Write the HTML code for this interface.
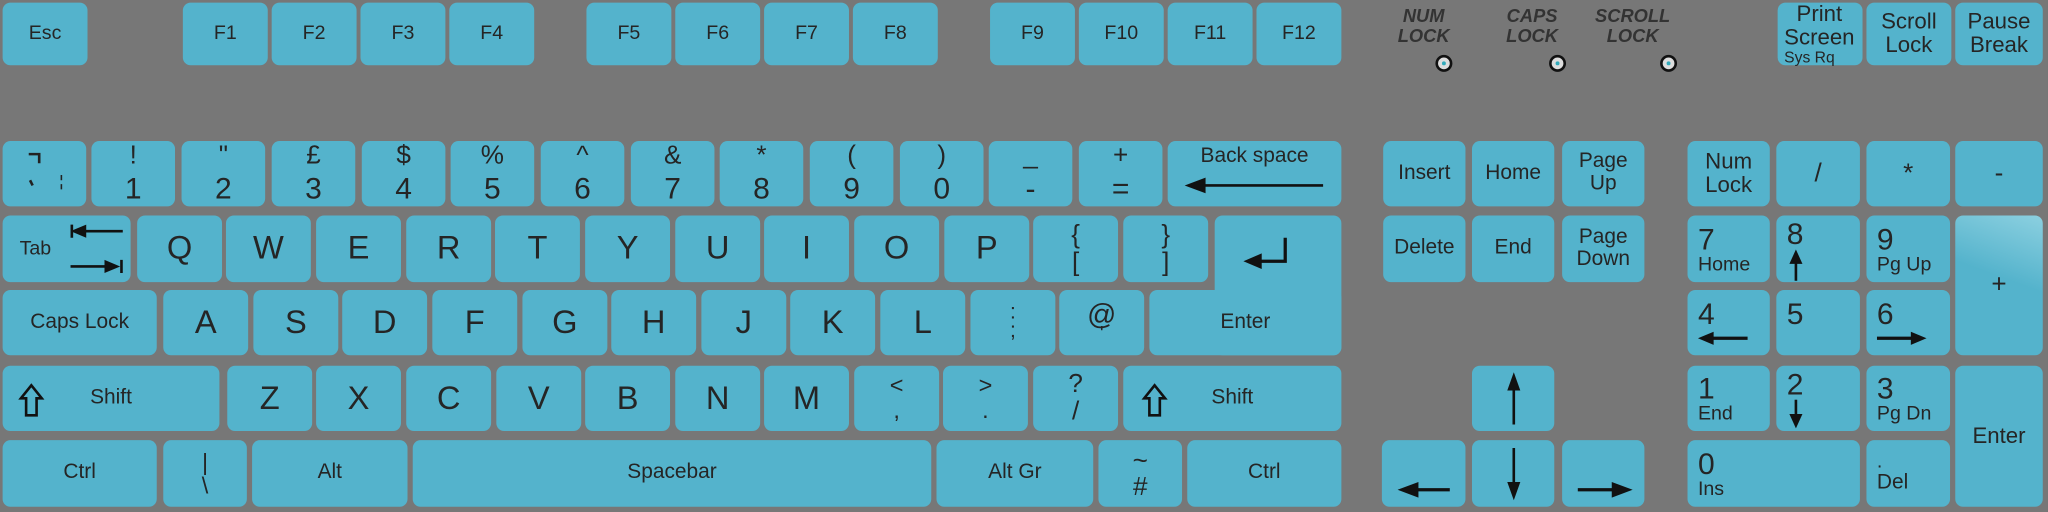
<!DOCTYPE html>
<html><head><meta charset="utf-8"><style>
html,body{margin:0;padding:0;background:#777;width:2048px;height:512px;overflow:hidden}
#w{position:absolute;left:0;top:0;width:1568px;height:392px;transform:scale(1.30612);transform-origin:0 0;background:#777}
.k{position:absolute;background:#54b3cc;border-radius:6px;color:#252525;font-family:"Liberation Sans",sans-serif;display:flex;align-items:center;justify-content:center;text-align:center;font-size:15px;line-height:1.05}
.f{top:2px;height:48px;width:65px}
.n{top:108px;height:50px;width:64px;flex-direction:column}
.n b{font-weight:normal;font-size:20px;display:block;margin-bottom:2px}
.n i{font-style:normal;font-size:23px;display:block}
.q{top:165px;height:51px;width:65px;font-size:25px}
.a{top:222px;height:50px;width:65px;font-size:25px}
.z{top:280px;height:50px;width:65px;font-size:25px}
.b{top:337px;height:51px}
.led{position:absolute;font-family:"Liberation Sans",sans-serif;font-weight:bold;font-style:italic;font-size:14px;color:#333;text-align:center;line-height:15px}
.dot{position:absolute;width:9px;height:9px;border-radius:50%;background:#ddd;border:2.5px solid #111}
.dot:after{content:"";position:absolute;left:3px;top:3px;width:3px;height:3px;border-radius:50%;background:#3ab}
.np{flex-direction:column;align-items:flex-start;justify-content:center;padding-left:8px;box-sizing:border-box}
.np b{font-weight:normal;font-size:23px}
.np i{font-style:normal;font-size:15px}
svg{display:block}
</style></head><body><div id="w">
<!-- F row -->
<div class="k f" style="left:2px">Esc</div>
<div class="k f" style="left:140px">F1</div>
<div class="k f" style="left:208px">F2</div>
<div class="k f" style="left:276px">F3</div>
<div class="k f" style="left:344px">F4</div>
<div class="k f" style="left:449px">F5</div>
<div class="k f" style="left:517px">F6</div>
<div class="k f" style="left:585px">F7</div>
<div class="k f" style="left:653px">F8</div>
<div class="k f" style="left:758px">F9</div>
<div class="k f" style="left:826px">F10</div>
<div class="k f" style="left:894px">F11</div>
<div class="k f" style="left:962px">F12</div>
<div class="k f" style="left:1361px;font-size:17px;flex-direction:column;align-items:flex-start;padding-left:5px;box-sizing:border-box">Print<br>Screen<span style="font-size:12px">Sys Rq</span></div>
<div class="k f" style="left:1429px;font-size:17px">Scroll<br>Lock</div>
<div class="k f" style="left:1497px;width:67px;font-size:17px">Pause<br>Break</div>
<!-- LEDs -->
<div class="led" style="left:1055px;top:5px;width:70px">NUM<br>LOCK</div>
<div class="led" style="left:1138px;top:5px;width:70px">CAPS<br>LOCK</div>
<div class="led" style="left:1205px;top:5px;width:90px">SCROLL<br>LOCK</div>
<div class="dot" style="left:1099px;top:42px"></div>
<div class="dot" style="left:1186px;top:42px"></div>
<div class="dot" style="left:1271px;top:42px"></div>
<!-- number row -->
<div class="k n" style="left:2px"><svg width="64" height="50"><path d="M20 10h8v7" stroke="#222" stroke-width="2" fill="none"/><path d="M21 30l2 4" stroke="#222" stroke-width="2"/><path d="M45 26v4M45 33v4" stroke="#222" stroke-width="1.2"/></svg></div>
<div class="k n" style="left:70px"><b>!</b><i>1</i></div>
<div class="k n" style="left:139px"><b>"</b><i>2</i></div>
<div class="k n" style="left:208px"><b>£</b><i>3</i></div>
<div class="k n" style="left:277px"><b>$</b><i>4</i></div>
<div class="k n" style="left:345px"><b>%</b><i>5</i></div>
<div class="k n" style="left:414px"><b>^</b><i>6</i></div>
<div class="k n" style="left:483px"><b>&amp;</b><i>7</i></div>
<div class="k n" style="left:551px"><b>*</b><i>8</i></div>
<div class="k n" style="left:620px"><b>(</b><i>9</i></div>
<div class="k n" style="left:689px"><b>)</b><i>0</i></div>
<div class="k n" style="left:757px"><b>_</b><i>-</i></div>
<div class="k n" style="left:826px"><b>+</b><i>=</i></div>
<div class="k n" style="left:894px;width:133px;justify-content:flex-start;padding-top:4px;box-sizing:border-box"><span style="font-size:16px">Back space</span><svg width="120" height="22"><path d="M20 13h92" stroke="#111" stroke-width="2"/><path d="M6 13l16-6v12z" fill="#111"/></svg></div>
<!-- Q row -->
<div class="k q" style="left:2px;width:98px;font-size:15px;justify-content:flex-start;padding-left:13px;box-sizing:border-box">Tab<svg style="position:absolute;left:48px;top:4px" width="48" height="44"><path d="M10 8h34" stroke="#111" stroke-width="2"/><path d="M4 8l12-5v10z" fill="#111"/><path d="M5 3v10" stroke="#111" stroke-width="2"/><path d="M4 35h34" stroke="#111" stroke-width="2"/><path d="M42 35l-12-5v10z" fill="#111"/><path d="M43 30v10" stroke="#111" stroke-width="2"/></svg></div>
<div class="k q" style="left:105px">Q</div>
<div class="k q" style="left:173px">W</div>
<div class="k q" style="left:242px">E</div>
<div class="k q" style="left:311px">R</div>
<div class="k q" style="left:379px">T</div>
<div class="k q" style="left:448px">Y</div>
<div class="k q" style="left:517px">U</div>
<div class="k q" style="left:585px">I</div>
<div class="k q" style="left:654px">O</div>
<div class="k q" style="left:723px">P</div>
<div class="k q" style="left:791px;font-size:20px;flex-direction:column">{<br>[</div>
<div class="k q" style="left:860px;font-size:20px;flex-direction:column">}<br>]</div>
<div class="k" style="left:930px;top:165px;width:97px;height:107px"></div>
<div class="k" style="left:880px;top:222px;width:147px;height:50px;font-size:16px">Enter</div>
<svg style="position:absolute;left:950px;top:180px" width="40" height="32"><path d="M34 2v18H14" stroke="#111" stroke-width="2.5" fill="none"/><path d="M2 20l14-6v12z" fill="#111"/></svg>
<!-- A row -->
<div class="k a" style="left:2px;width:118px;font-size:16px">Caps Lock</div>
<div class="k a" style="left:125px">A</div>
<div class="k a" style="left:194px">S</div>
<div class="k a" style="left:262px">D</div>
<div class="k a" style="left:331px">F</div>
<div class="k a" style="left:400px">G</div>
<div class="k a" style="left:468px">H</div>
<div class="k a" style="left:537px">J</div>
<div class="k a" style="left:605px">K</div>
<div class="k a" style="left:674px">L</div>
<div class="k a" style="left:743px;font-size:16px;flex-direction:column;line-height:0.9">:<br>;</div>
<div class="k a" style="left:811px;font-size:22px;flex-direction:column;line-height:0.8">@<span style="font-size:15px">'</span></div>
<!-- Z row -->
<div class="k z" style="left:2px;width:166px;font-size:16px">Shift<svg style="position:absolute;left:12px;top:13px" width="20" height="28"><path d="M10 2L2 12h4v13h8V12h4z" fill="none" stroke="#111" stroke-width="2"/></svg></div>
<div class="k z" style="left:174px">Z</div>
<div class="k z" style="left:242px">X</div>
<div class="k z" style="left:311px">C</div>
<div class="k z" style="left:380px">V</div>
<div class="k z" style="left:448px">B</div>
<div class="k z" style="left:517px">N</div>
<div class="k z" style="left:585px">M</div>
<div class="k z" style="left:654px;font-size:18px;flex-direction:column">&lt;<br>,</div>
<div class="k z" style="left:722px;font-size:18px;flex-direction:column">&gt;<br>.</div>
<div class="k z" style="left:791px;font-size:20px;flex-direction:column">?<br>/</div>
<div class="k z" style="left:860px;width:167px;font-size:16px">Shift<svg style="position:absolute;left:14px;top:13px" width="20" height="28"><path d="M10 2L2 12h4v13h8V12h4z" fill="none" stroke="#111" stroke-width="2"/></svg></div>
<!-- bottom -->
<div class="k b" style="left:2px;width:118px;font-size:16px">Ctrl</div>
<div class="k b" style="left:125px;width:64px;font-size:18px;flex-direction:column;line-height:1">|<br>\</div>
<div class="k b" style="left:193px;width:119px;font-size:16px">Alt</div>
<div class="k b" style="left:316px;width:397px;font-size:16px">Spacebar</div>
<div class="k b" style="left:717px;width:120px;font-size:16px">Alt Gr</div>
<div class="k b" style="left:841px;width:64px;font-size:20px;flex-direction:column;line-height:1">~<br>#</div>
<div class="k b" style="left:909px;width:118px;font-size:16px">Ctrl</div>
<!-- nav -->
<div class="k" style="left:1059px;top:108px;width:63px;height:50px;font-size:16px">Insert</div>
<div class="k" style="left:1127px;top:108px;width:63px;height:50px;font-size:16px">Home</div>
<div class="k" style="left:1196px;top:108px;width:63px;height:50px;font-size:16px">Page<br>Up</div>
<div class="k" style="left:1059px;top:165px;width:63px;height:51px;font-size:16px">Delete</div>
<div class="k" style="left:1127px;top:165px;width:63px;height:51px;font-size:16px">End</div>
<div class="k" style="left:1196px;top:165px;width:63px;height:51px;font-size:16px">Page<br>Down</div>
<div class="k" style="left:1127px;top:280px;width:63px;height:50px"><svg width="20" height="44"><path d="M10 14v28" stroke="#111" stroke-width="2"/><path d="M10 2l-5 14h10z" fill="#111"/></svg></div>
<div class="k" style="left:1058px;top:337px;width:64px;height:51px;align-items:flex-end"><svg width="60" height="22"><path d="M22 9h28" stroke="#111" stroke-width="2.5"/><path d="M10 9l16-6v12z" fill="#111"/></svg></div>
<div class="k" style="left:1127px;top:337px;width:63px;height:51px"><svg width="20" height="44"><path d="M10 2v28" stroke="#111" stroke-width="2"/><path d="M10 42l-5 -14h10z" fill="#111"/></svg></div>
<div class="k" style="left:1196px;top:337px;width:63px;height:51px;align-items:flex-end"><svg width="60" height="22"><path d="M10 9h28" stroke="#111" stroke-width="2.5"/><path d="M52 9l-16-6v12z" fill="#111"/></svg></div>
<!-- numpad -->
<div class="k" style="left:1292px;top:108px;width:63px;height:50px;font-size:17px">Num<br>Lock</div>
<div class="k" style="left:1360px;top:108px;width:64px;height:50px;font-size:20px">/</div>
<div class="k" style="left:1429px;top:108px;width:64px;height:50px;font-size:20px">*</div>
<div class="k" style="left:1497px;top:108px;width:67px;height:50px;font-size:20px">-</div>
<div class="k np" style="left:1292px;top:165px;width:63px;height:51px"><b>7</b><i>Home</i></div>
<div class="k np" style="left:1360px;top:165px;width:64px;height:51px;justify-content:flex-start;padding-top:2px"><b>8</b><svg width="14" height="24"><path d="M7 8v16" stroke="#111" stroke-width="2"/><path d="M7 0l-5 11h10z" fill="#111"/></svg></div>
<div class="k np" style="left:1429px;top:165px;width:64px;height:51px"><b>9</b><i>Pg Up</i></div>
<div class="k" style="left:1497px;top:165px;width:67px;height:107px;font-size:20px;background:linear-gradient(200deg,#8cd0e0 0%,#54b3cc 45%)">+</div>
<div class="k np" style="left:1292px;top:222px;width:63px;height:50px"><b>4</b><svg width="40" height="14"><path d="M10 7h28" stroke="#111" stroke-width="2.5"/><path d="M0 7l12-5v10z" fill="#111"/></svg></div>
<div class="k np" style="left:1360px;top:222px;width:64px;height:50px;justify-content:flex-start;padding-top:6px"><b>5</b></div>
<div class="k np" style="left:1429px;top:222px;width:64px;height:50px"><b>6</b><svg width="40" height="14"><path d="M0 7h28" stroke="#111" stroke-width="2.5"/><path d="M38 7l-12-5v10z" fill="#111"/></svg></div>
<div class="k np" style="left:1292px;top:280px;width:63px;height:50px"><b>1</b><i>End</i></div>
<div class="k np" style="left:1360px;top:280px;width:64px;height:50px"><b>2</b><svg width="14" height="22"><path d="M7 0v14" stroke="#111" stroke-width="2"/><path d="M7 22l-5-11h10z" fill="#111"/></svg></div>
<div class="k np" style="left:1429px;top:280px;width:64px;height:50px"><b>3</b><i>Pg Dn</i></div>
<div class="k" style="left:1497px;top:280px;width:67px;height:108px;font-size:17px">Enter</div>
<div class="k np" style="left:1292px;top:337px;width:132px;height:51px"><b>0</b><i>Ins</i></div>
<div class="k np" style="left:1429px;top:337px;width:64px;height:51px"><i>.</i><i style="font-size:16px">Del</i></div>
</div></body></html>
